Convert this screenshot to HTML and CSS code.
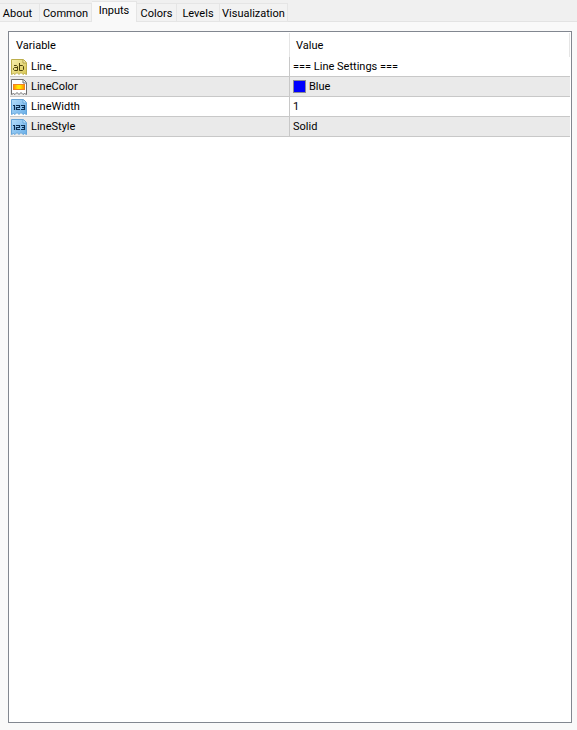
FILE: index.html
```html
<!DOCTYPE html>
<html lang="en">
<head>
<meta charset="utf-8">
<title>Inputs</title>
<link rel="stylesheet" href="styles.css">
</head>
<body>
<svg class="symbols" aria-hidden="true">
  <defs>
    <linearGradient id="gold" x2="1" y2="1"><stop stop-color="#f6efae"/><stop offset="1" stop-color="#d8c654"/></linearGradient>
    <linearGradient id="sky" x2="1" y2="1"><stop stop-color="#b4dcfa"/><stop offset="1" stop-color="#68aee8"/></linearGradient>
    <linearGradient id="flame"><stop stop-color="#ff8c00"/><stop offset=".4" stop-color="#ffe800"/><stop offset=".6" stop-color="#ffe800"/><stop offset="1" stop-color="#ff8c00"/></linearGradient>
    <path id="sheet" d="M.5 .5H12.5L15.5 3.5V15.5L13.5 14.5L12 15.5L10 13.5L8 15.5L6 13.5L4 15.5L2.5 14.5L.5 15.5Z"/>
    <symbol id="text-type" viewBox="0 0 16 16">
      <use href="#sheet" fill="url(#gold)" stroke="#bcae4c"/>
      <path d="M12 1V4H15" fill="#fff8c8" stroke="#b0a044"/>
      <path d="M3 6.5H5.5L6.5 7.5V11.5H3.5L2.5 10.5V9.5L3.5 8.5H6.5M8.5 4V11.5H11.5L12.5 10.5V7.5L11.5 6.5H8.5" fill="none" stroke="#4c430c"/>
    </symbol>
    <symbol id="color-type" viewBox="0 0 16 16">
      <use href="#sheet" fill="#fff" stroke="#707070"/>
      <path d="M12 1V4H15" fill="#eee" stroke="#707070"/>
      <rect x="2.5" y="5.5" width="11" height="5" fill="url(#flame)" stroke="#f08020"/>
    </symbol>
    <symbol id="number-type" viewBox="0 0 16 16">
      <use href="#sheet" fill="url(#sky)" stroke="#65a4d8"/>
      <path d="M12 1V4H15" fill="#d8efff" stroke="#65a4d8"/>
      <path d="M2 6.5H3.5V11M5 6.5H8.5V8.5H5.5V10.5H9M10 6.5H13.5V10.5H10M11 8.5H13.5" fill="none" stroke="#0b2c50" stroke-width="1.2"/>
    </symbol>
  </defs>
</svg>
<main class="page">
  <div class="tabs" role="tablist">
    <button class="tab" role="tab" aria-selected="false">About</button>
    <button class="tab" role="tab" aria-selected="false">Common</button>
    <button class="tab active" role="tab" aria-selected="true">Inputs</button>
    <button class="tab" role="tab" aria-selected="false">Colors</button>
    <button class="tab" role="tab" aria-selected="false">Levels</button>
    <button class="tab" role="tab" aria-selected="false">Visualization</button>
  </div>
  <section class="panel">
    <table class="inputs">
      <thead><tr><th>Variable</th><th>Value</th></tr></thead>
      <tbody>
        <tr><td><div class="cell"><svg class="icon"><use href="#text-type"/></svg>Line_</div></td><td>=== Line Settings ===</td></tr>
        <tr><td><div class="cell"><svg class="icon"><use href="#color-type"/></svg>LineColor</div></td><td><div class="cell color"><span class="swatch"></span>Blue</div></td></tr>
        <tr><td><div class="cell"><svg class="icon"><use href="#number-type"/></svg>LineWidth</div></td><td>1</td></tr>
        <tr><td><div class="cell"><svg class="icon"><use href="#number-type"/></svg>LineStyle</div></td><td>Solid</td></tr>
      </tbody>
    </table>
  </section>
</main>
</body>
</html>
```
FILE: styles.css
```css
* { box-sizing: border-box; }
body {
  margin: 0;
  background: #f9f9f9;
  color: #000;
  font: 11px/19px Roboto, "Liberation Sans", sans-serif;
}
.symbols { position: absolute; width: 0; height: 0; }
.page { display: flex; flex-direction: column; min-height: 100vh; }
.tabs {
  display: grid;
  grid-template-columns: 40px 52px 45px 40px 43px 68px;
  align-items: end;
  height: 22px;
  background: #f0f0f0;
  box-shadow: inset 0 -1px #e3e3e3;
}
.tab {
  height: 19px;
  padding: 2px 0 0;
  border: solid #e5e5e5;
  border-width: 1px 1px 1px 0;
  background: #f2f2f2;
  color: #000;
  font: inherit;
  line-height: 16px;
  white-space: nowrap;
}
.tab:first-child { padding-right: 4px; }
.active {
  height: 21px;
  padding: 0 0 2px;
  border-bottom: 0;
  background: #f9f9f9;
}
.panel {
  flex: 1;
  margin: 9px 5px 7px 8px;
  padding: 1px;
  border: 1px solid #828790;
  background: #fff;
}
.inputs { width: 100%; table-layout: fixed; border-collapse: separate; border-spacing: 0; }
th {
  height: 24px;
  padding: 1px 6px 0;
  border-right: 1px solid #e5e5e5;
  font-weight: 400;
  text-align: left;
}
td { height: 20px; padding: 0 3px; border-bottom: 1px solid #c8c8c8; }
td:first-child { padding: 0 1px; border-right: 1px solid #c8c8c8; }
tbody tr:nth-child(even) { background: #eaeaea; }
.cell { display: flex; align-items: center; gap: 4px; }
.color { gap: 3px; }
.icon { width: 16px; height: 16px; }
.swatch { width: 13px; height: 13px; border: 1px solid #8c8c94; background: #00f; }
```
